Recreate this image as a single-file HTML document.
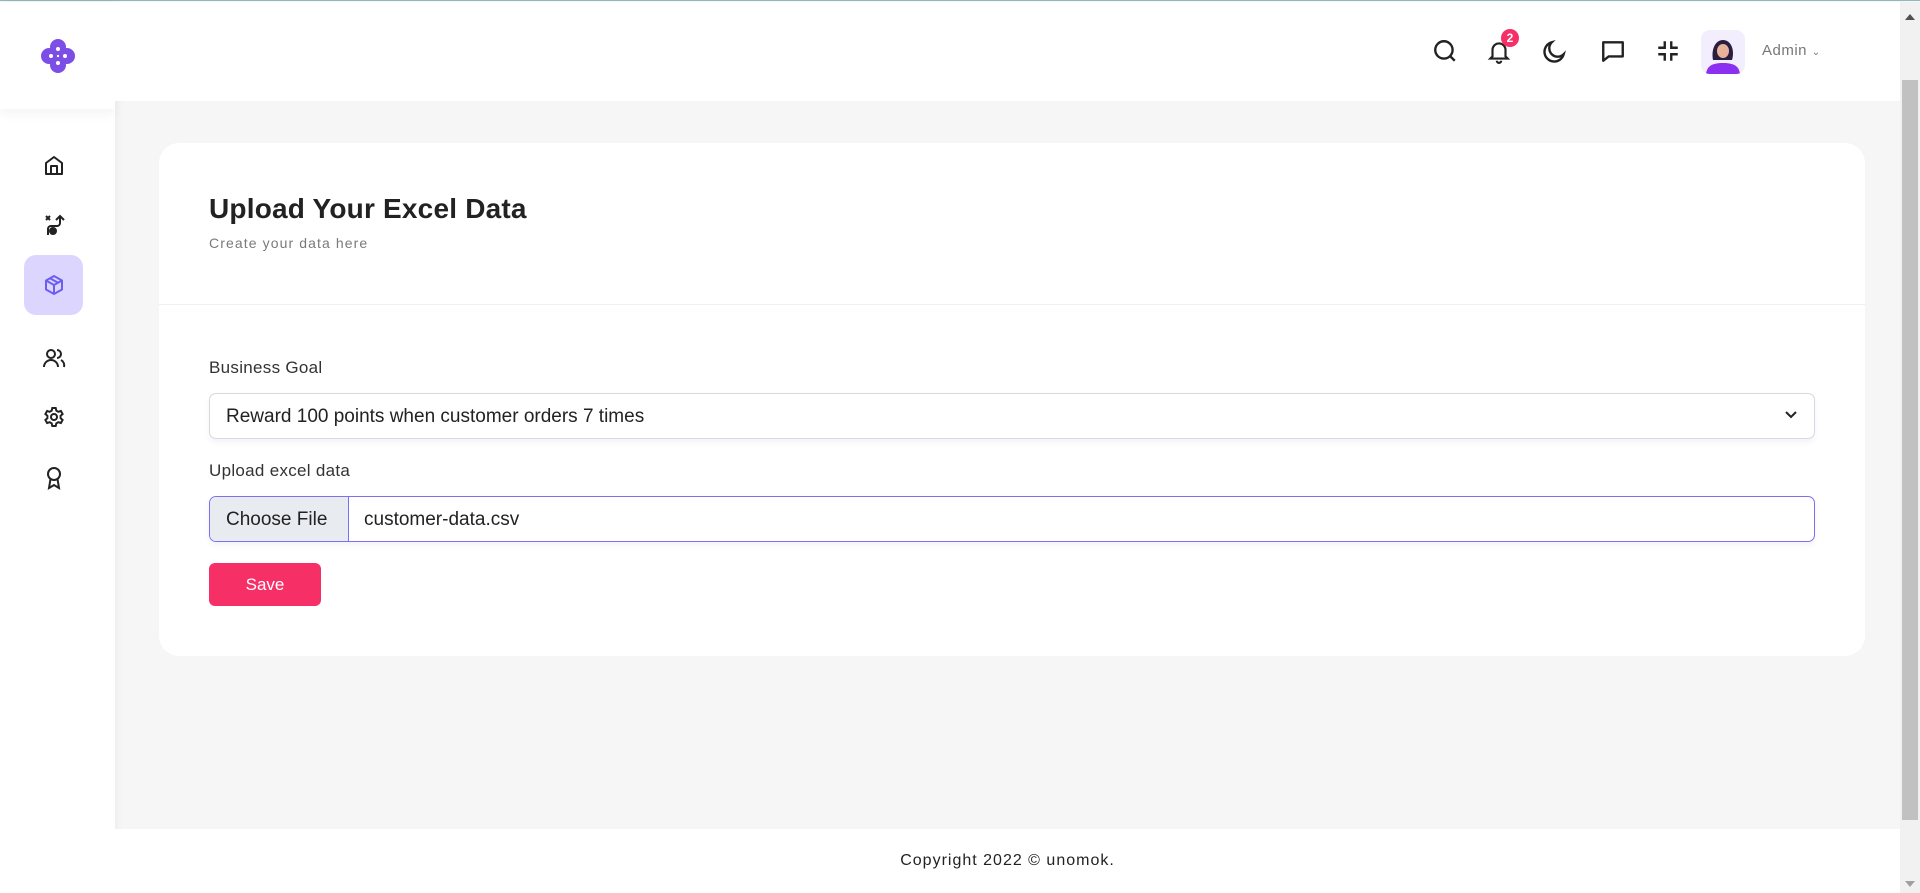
<!DOCTYPE html>
<html><head><style>
*{box-sizing:border-box;margin:0;padding:0}
body{width:1920px;height:892px;overflow:hidden;background:#f6f6f6;font-family:"Liberation Sans",sans-serif;position:relative;border-top:1px solid #8fb8bb}
.side{position:absolute;left:0;top:1px;width:115px;height:891px;background:#fff;box-shadow:2px 0 8px rgba(0,0,0,.04)}
.logo{height:107px;display:flex;align-items:center;justify-content:center;box-shadow:0 6px 10px rgba(0,0,0,.04)}
.ic{position:absolute;left:42px;width:24px;height:24px}
.act{position:absolute;left:24px;top:253px;width:59px;height:60px;background:#dcd6ff;border-radius:12px}
.hdr{position:absolute;left:115px;top:1px;right:20px;height:99px;background:#fff}
.scroll{position:absolute;right:0;top:1px;width:20px;height:891px;background:#f1f1f1}
.thumb{position:absolute;right:2px;top:78px;width:16px;height:740px;background:#c1c1c1}
.card{position:absolute;left:159px;top:142px;width:1706px;height:513px;background:#fff;border-radius:20px}
h1{position:absolute;left:50px;top:50px;font-size:28px;font-weight:700;color:#222;letter-spacing:.2px}
.sub{position:absolute;left:50px;top:92px;font-size:14px;color:#7a7a7a;letter-spacing:1.1px}
.div{position:absolute;left:0;right:0;top:161px;border-top:1px solid #eef0f4}
.lbl{position:absolute;left:50px;font-size:17px;color:#333;letter-spacing:.3px}
.sel{position:absolute;left:50px;top:250px;width:1606px;height:46px;border:1px solid #d8d8e0;border-radius:7px;font-size:19px;color:#222;padding:12px 16px;box-shadow:0 3px 6px rgba(100,100,160,.08)}
.file{position:absolute;left:50px;top:353px;width:1606px;height:46px;border:1px solid #7d70f0;border-radius:7px;font-size:19px;color:#222;display:flex;overflow:hidden;box-shadow:0 3px 6px rgba(100,100,160,.08)}
.file .b{background:#e8ebef;border-right:1px solid #7d70f0;padding:12px 16px;width:139px}
.file .n{padding:12px 15px}
.save{position:absolute;left:50px;top:420px;width:112px;height:43px;background:#f72f67;border-radius:6px;color:#fff;font-size:17px;text-align:center;line-height:43px}
.foot{position:absolute;left:115px;right:20px;top:828px;height:64px;background:#fff;text-align:center;font-size:16px;color:#222;letter-spacing:1px;line-height:64px}
.hi{position:absolute;top:37px;width:26px;height:26px}
</style></head><body>
<div class="side">
<div class="logo"><svg width="40" height="40" viewBox="0 0 40 40"><g fill="#7b4fe6"><circle cx="20" cy="11" r="8"/><circle cx="20" cy="29" r="8"/><circle cx="11" cy="20" r="8"/><circle cx="29" cy="20" r="8"/></g><g fill="#fff"><circle cx="20" cy="13" r="2"/><circle cx="20" cy="27" r="2"/><circle cx="13" cy="20" r="2"/><circle cx="27" cy="20" r="2"/></g></svg></div>
<div class="act"></div>
<svg class="ic" style="top:151px" viewBox="0 0 24 24" fill="none" stroke="#222" stroke-width="2" stroke-linejoin="round"><path d="M4 21V10l8-6 8 6v11z M9 21v-8h6v8"/></svg>
<svg class="ic" style="top:211px" viewBox="0 0 24 24" fill="none" stroke="#222" stroke-width="2"><path d="M4 3l4 4M8 3l-4 4M6 22v-6a3 3 0 013-3h6a3 3 0 003-3V3M14 7l4-4 4 4"/><circle cx="11" cy="18" r="3" fill="#222"/></svg>
<svg class="ic" style="top:271px" viewBox="0 0 24 24" fill="none" stroke="#6c5ff0" stroke-width="2" stroke-linejoin="round"><path d="M12 3l8 4.5v9L12 21l-8-4.5v-9z M4 7.5l8 4.5 8-4.5 M12 12v9 M8 5.3l8 4.5"/></svg>
<svg class="ic" style="top:344px" viewBox="0 0 24 24" fill="none" stroke="#222" stroke-width="2"><circle cx="9" cy="8" r="4"/><path d="M2 21a7 7 0 0114 0M15 4a4 4 0 010 8M19 14a6 6 0 013 7"/></svg>
<svg class="ic" style="top:403px" viewBox="0 0 24 24" fill="none" stroke="#222" stroke-width="2"><circle cx="12" cy="12" r="3"/><path d="M10.3 3h3.4l.6 2.6 2 1.2 2.6-.8 1.7 3-2 1.8v2.4l2 1.8-1.7 3-2.6-.8-2 1.2-.6 2.6h-3.4l-.6-2.6-2-1.2-2.6.8-1.7-3 2-1.8v-2.4l-2-1.8 1.7-3 2.6.8 2-1.2z"/></svg>
<svg class="ic" style="top:464px" viewBox="0 0 24 24" fill="none" stroke="#222" stroke-width="2"><circle cx="12" cy="8" r="6"/><path d="M8.5 13L7 22l5-3 5 3-1.5-9"/></svg>
</div>
<div class="hdr"></div>
<svg class="hi" style="left:1432px" viewBox="0 0 24 24" fill="none" stroke="#222" stroke-width="2.2"><circle cx="11" cy="11" r="8"/><path d="M17 17l4 4"/></svg>
<svg class="hi" style="left:1486px" viewBox="0 0 24 24" fill="none" stroke="#222" stroke-width="2"><path d="M6 17V11a6 6 0 0112 0v6l2 2H4z M10 21a2 2 0 004 0"/></svg>
<div style="position:absolute;left:1501px;top:28px;width:18px;height:18px;border-radius:9px;background:#f72f67;color:#fff;font-size:12px;font-weight:700;text-align:center;line-height:18px">2</div>
<svg class="hi" style="left:1542px" viewBox="0 0 24 24" fill="none" stroke="#222" stroke-width="2.2"><path d="M20 15A9 9 0 119 4a7 7 0 0011 11z"/></svg>
<svg class="hi" style="left:1600px" viewBox="0 0 24 24" fill="none" stroke="#222" stroke-width="2.2" stroke-linejoin="round"><path d="M3 4h18v13H8l-5 4z"/></svg>
<svg class="hi" style="left:1655px" viewBox="0 0 24 24" fill="none" stroke="#222" stroke-width="2.2"><path d="M9 3v6H3M15 3v6h6M9 21v-6H3M15 21v-6h6"/></svg>
<div style="position:absolute;left:1701px;top:29px;width:44px;height:44px;border-radius:9px;background:#f3eefe;overflow:hidden"><svg width="44" height="44" viewBox="0 0 44 44"><path d="M12 30c-2-10 2-20 10-20s12 10 9 20z" fill="#2a1f3d"/><ellipse cx="22" cy="21" rx="6" ry="7" fill="#e8b39a"/><path d="M5 44c1-8 6-11 17-11s16 3 17 11z" fill="#8b2ff0"/></svg></div>
<div style="position:absolute;left:1762px;top:41px;font-size:15px;color:#777;letter-spacing:.5px">Admin <span style="font-size:10px">&#8964;</span></div>
<div class="scroll"><div style="position:absolute;left:5px;top:12px;border:5px solid transparent;border-bottom:6px solid #505050;border-top:0"></div><div class="thumb"></div><div style="position:absolute;left:5px;bottom:6px;border:5px solid transparent;border-top:6px solid #a0a0a0;border-bottom:0"></div></div>
<div class="card">
<h1>Upload Your Excel Data</h1>
<div class="sub">Create your data here</div>
<div class="div"></div>
<div class="lbl" style="top:215px">Business Goal</div>
<div class="sel">Reward 100 points when customer orders 7 times<svg style="position:absolute;right:16px;top:16px" width="14" height="10" viewBox="0 0 14 10" fill="none" stroke="#222" stroke-width="2"><path d="M2 2l5 5 5-5"/></svg></div>
<div class="lbl" style="top:318px">Upload excel data</div>
<div class="file"><div class="b">Choose File</div><div class="n">customer-data.csv</div></div>
<div class="save">Save</div>
</div>
<div class="foot">Copyright 2022 © unomok.</div>
</body></html>
